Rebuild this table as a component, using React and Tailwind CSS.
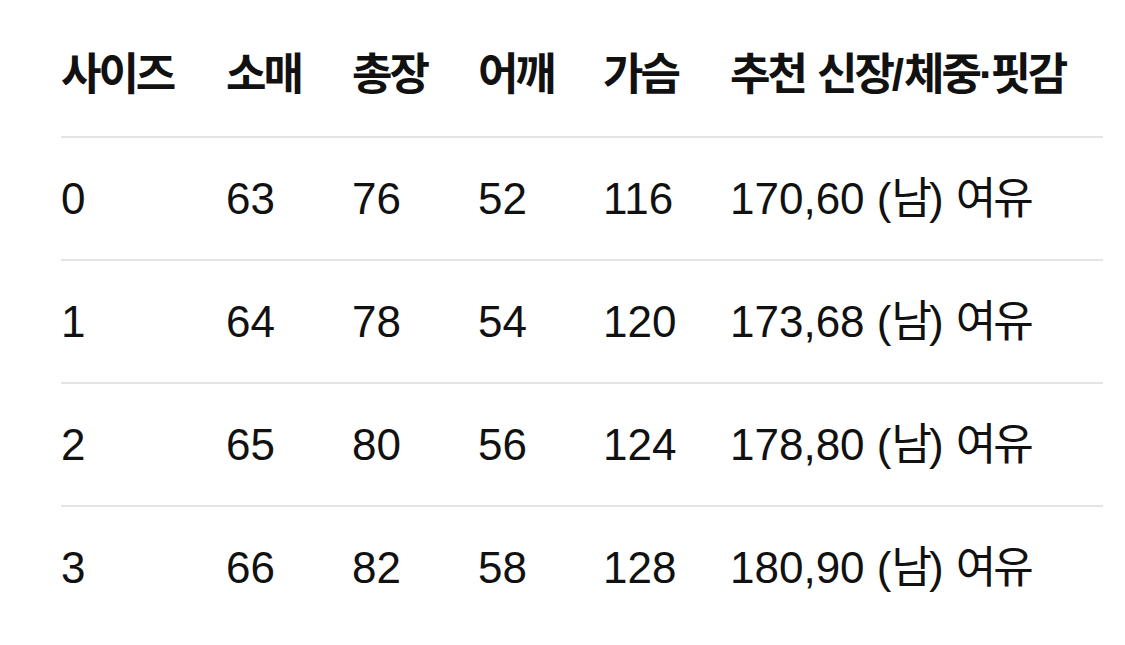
import React from "react";

const headers = ["사이즈", "소매", "총장", "어깨", "가슴", "추천 신장/체중·핏감"];
const rows = [
  ["0", "63", "76", "52", "116", "170,60 (남) 여유"],
  ["1", "64", "78", "54", "120", "173,68 (남) 여유"],
  ["2", "65", "80", "56", "124", "178,80 (남) 여유"],
  ["3", "66", "82", "58", "128", "180,90 (남) 여유"],
];

function Mixed({ text }) {
  const parts = text.split(/([\uAC00-\uD7A3\u00B7]+)/);
  return (
    <>
      {parts.map((p, i) =>
        /[\uAC00-\uD7A3]/.test(p) ? (
          <span key={i} className="tracking-[-0.07em]">
            {p}
          </span>
        ) : (
          <span key={i}>{p}</span>
        )
      )}
    </>
  );
}

const grid = "grid grid-cols-[165px_126px_126px_125px_127px_1fr] items-center";

export default function App() {
  return (
    <div
      className="w-[1125px] h-[645px] bg-white text-[#111111] overflow-hidden"
      style={{ fontFamily: '"Liberation Sans", "Noto Sans CJK KR", sans-serif' }}
    >
      <div className="ml-[61px] w-[1042px] pt-[13px]">
        <div className={`${grid} h-[123px] text-[44px] font-bold`}>
          {headers.map((h, i) => (
            <div key={i} className="whitespace-nowrap">
              <Mixed text={h} />
            </div>
          ))}
        </div>
        {rows.map((r, ri) => (
          <div key={ri} className={`${grid} h-[123px] border-t-2 border-[#e4e4e4] text-[44px]`}>
            {r.map((c, ci) => (
              <div key={ci} className="whitespace-nowrap">
                <Mixed text={c} />
              </div>
            ))}
          </div>
        ))}
      </div>
    </div>
  );
}
